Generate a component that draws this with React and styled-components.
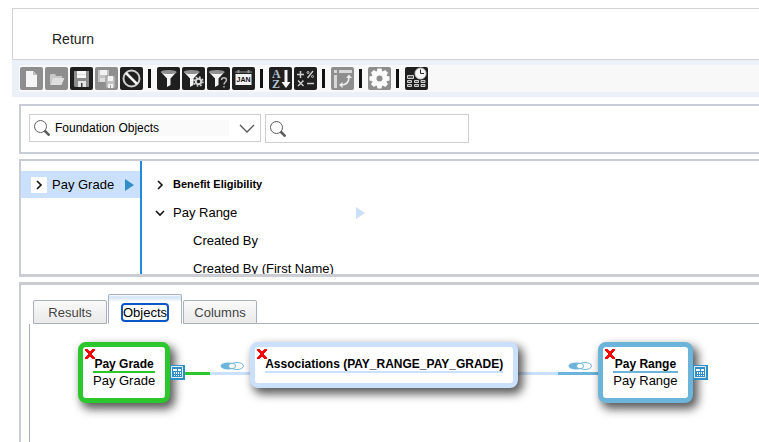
import React, { useState } from 'react';
import styled, { createGlobalStyle } from 'styled-components';

const GlobalStyle = createGlobalStyle`
  *, *::before, *::after {
    box-sizing: border-box;
  }

  body {
    margin: 0;
    background: #ffffff;
    color: #000000;
    font-family: "Liberation Sans", Arial, sans-serif;
    font-size: 13px;
  }

  button, input, select {
    font: inherit;
    color: inherit;
  }

  svg {
    display: block;
    flex: none;
  }
`;

const Page = styled.div`
  display: flex;
  flex-direction: column;
  min-height: 100vh;
  padding: 8px 0 0 12px;
  overflow: hidden;
`;

const Header = styled.header`
  display: flex;
  align-items: center;
  height: 52px;
  padding: 10px 0 0 39px;
  border: 1px solid #d2d2d2;
  border-right: none;
`;

const ReturnLink = styled.a`
  color: #222222;
  font-size: 14px;
  text-decoration: none;
`;

const ToolbarBand = styled.div`
  padding: 5px 0 5px 7px;
  background: #ecf0f8;
`;

const Toolbar = styled.div`
  display: flex;
  align-items: center;
  gap: 2px;
  height: 27px;
  padding-left: 1px;
  background: #f8f8f8;
`;

const ToolButton = styled.button`
  width: 23px;
  height: 23px;
  padding: 0;
  border: none;
  border-radius: 2px;
  background: ${(props) => (props.disabled ? '#8e8e8e' : '#1f1f1f')};
  cursor: ${(props) => (props.disabled ? 'default' : 'pointer')};
`;

const Separator = styled.span`
  width: 3px;
  height: 19px;
  margin: 0 4px 0 3px;
  background: #111111;
`;

const Main = styled.main`
  display: flex;
  flex: 1;
  flex-direction: column;
  gap: 5px;
  padding: 7px 0 0 7px;
`;

const SearchPanel = styled.section`
  display: flex;
  align-items: flex-start;
  gap: 4px;
  padding: 8px;
  height: 50px;
  border: 2px solid #c8ccd8;
  border-right: none;
`;

const Field = styled.label`
  display: flex;
  align-items: center;
  gap: 5px;
  width: ${(props) => props.$width};
  height: ${(props) => props.$height};
  padding: 0 5px 0 4px;
  border: 1px solid #cfcfcf;
`;

const ObjectSelect = styled.select`
  flex: 1;
  min-width: 0;
  height: 16px;
  margin-right: 5px;
  padding: 0;
  border: none;
  outline: none;
  background: #fafafa;
  font-size: 12px;
  appearance: none;
`;

const SearchInput = styled.input`
  flex: 1;
  min-width: 0;
  padding: 0;
  border: none;
  outline: none;
  background: transparent;
`;

const TreePanel = styled.section`
  display: grid;
  grid-template-columns: 121px 1fr;
  height: 118px;
  border: 2px solid #c8ccd8;
  border-right: none;
  border-bottom: 3px solid #cbccd4;
  overflow: hidden;
`;

const TreeColumn = styled.div`
  padding-top: 10px;
  overflow: hidden;

  &:first-child {
    border-right: 2px solid #1f8be0;
  }
`;

const TreeRow = styled.div`
  display: flex;
  align-items: center;
  gap: 5px;
  max-width: 223px;
  height: 27px;
  margin-bottom: 1px;
  padding-left: ${(props) => (props.$child ? '51px' : '10px')};
  padding-right: ${(props) => (props.$selected ? '6px' : '0')};
  background: ${(props) => (props.$selected ? '#cbe0fc' : 'transparent')};
`;

const TreeLabel = styled.span`
  flex: 1;
  white-space: nowrap;
  font-size: ${(props) => (props.$bold ? '11px' : '13px')};
  font-weight: ${(props) => (props.$bold ? 700 : 400)};
  line-height: 15px;
`;

const Expander = styled.button`
  display: flex;
  align-items: center;
  justify-content: center;
  width: 16px;
  height: 16px;
  padding: 0;
  border: none;
  background: #ffffff;
  cursor: pointer;
`;

const ResultPanel = styled.section`
  display: flex;
  flex: 1;
  flex-direction: column;
  padding: 9px 0 0 8px;
  border-top: 3px solid #cbccd0;
  border-left: 2px solid #c8ccd8;
`;

const TabList = styled.div`
  display: flex;
  align-items: flex-end;
  gap: 1px;
  padding-left: 4px;

  &::after {
    content: '';
    flex: 1;
    margin-left: -1px;
    border-bottom: 1px solid #a9b0bd;
  }
`;

const Tab = styled.button`
  width: 74px;
  height: ${(props) => (props['aria-selected'] ? '30px' : '24px')};
  padding: ${(props) => (props['aria-selected'] ? '6px 0 0' : '0')};
  border: 1px solid #a9b0bd;
  border-bottom-color: ${(props) => (props['aria-selected'] ? '#ffffff' : '#a9b0bd')};
  border-radius: 2px 2px 0 0;
  outline: none;
  background: ${(props) =>
    props['aria-selected']
      ? 'linear-gradient(#ffffff 0, #cfe3f6 2px, #ffffff 7px)'
      : 'linear-gradient(#fafafa, #e9e9e9)'};
  color: ${(props) => (props['aria-selected'] ? '#000000' : '#444444')};
  cursor: pointer;
`;

const TabText = styled.span`
  border-radius: 2px;
  outline: ${(props) => (props.$active ? '2px solid #0b57c9' : 'none')};
`;

const Canvas = styled.div`
  display: flex;
  flex: 1;
  align-items: flex-start;
  padding: 18px 0 24px 48px;
  border-left: 1px solid #a9b0bd;
`;

const Node = styled.div`
  position: relative;
  flex: none;
  padding: 10px;
  border: 5px solid ${(props) => props.$color};
  border-radius: 8px;
  background: #ffffff;
  box-shadow: 4px 5px 10px 1px rgba(0, 0, 0, 0.65);
  text-align: center;
  white-space: nowrap;
`;

const NodeTitle = styled.div`
  height: 16px;
  border-bottom: 2px solid ${(props) => props.$color};
  font-size: 12px;
  font-weight: 700;
  line-height: 14px;
`;

const NodeName = styled.div`
  line-height: 15px;
`;

const RemoveButton = styled.button`
  position: absolute;
  top: 2px;
  left: 2px;
  padding: 0;
  border: none;
  background: none;
  cursor: pointer;
`;

const TableBadge = styled.button`
  position: absolute;
  top: 18px;
  left: 100%;
  margin-left: 5px;
  padding: 0;
  border: none;
  background: none;
  z-index: 1;
`;

const Link = styled.div`
  display: flex;
  flex: none;
  flex-direction: column;
  gap: 2px;
  width: 80px;
  padding-top: 20px;
`;

const LinkToggle = styled.button`
  margin: 0 6px 0 50px;
  padding: 0;
  border: none;
  background: none;
`;

const LinkLine = styled.span`
  height: 3px;
  background: linear-gradient(
    90deg,
    ${(props) => props.$from} 50%,
    ${(props) => props.$to} 50%
  );
`;

const GREEN = '#2cc72c';
const PALE = '#cbe0fc';
const BLUE = '#6cb4d9';

const Funnel = ({ shift = 0 }) => (
  <g transform={`translate(${shift} 0)`}>
    <path d="M4 5l6 6.500v8.500l3.500-2v-6.500L19.500 5z" fill="#f4f4f4" />
    <ellipse cx="11.700" cy="5" rx="7.900" ry="2" fill="#8f8f8f" />
  </g>
);

const toolGroups = [
  [
    {
      name: 'New',
      disabled: true,
      icon: (
        <>
          <path d="M6 4h7l4 4v12H6z" fill="#f5f5f5" />
          <path d="M13 4v4h4z" fill="#bcbcbc" />
        </>
      ),
    },
    {
      name: 'Open',
      disabled: true,
      icon: (
        <>
          <path d="M5 8l1-1h4l1 2h6v3H8l-3 5z" fill="#c9c9c9" />
          <path d="M8 11h11.500l-3 7H5z" fill="#dedede" />
        </>
      ),
    },
    {
      name: 'Save',
      icon: (
        <>
          <path d="M4 4h15v16H5l-1-1z" fill="#8d8d8d" />
          <path d="M7 4h9v7H7z" fill="#f7f7f7" />
          <path d="M7 7.500h9" stroke="#dddddd" />
          <path d="M8 14h8v6H8z" fill="#e4e4e4" />
          <path d="M11 16h1.500v4H11z" fill="#444444" />
        </>
      ),
    },
    {
      name: 'Save as',
      disabled: true,
      icon: (
        <>
          <path d="M3 3h11v12H3z" fill="#c3c3c3" />
          <path d="M5 3h7v5H5z" fill="#f2f2f2" />
          <path d="M5 11h5v4H5z" fill="#dddddd" />
          <path d="M11 9h9v12h-9z" fill="#c3c3c3" stroke="#999999" />
          <path d="M13 9h5v5h-5zM13 17h5v4h-5z" fill="#f2f2f2" />
          <path d="M15.500 18v3" stroke="#a5a5a5" />
        </>
      ),
    },
    {
      name: 'Cancel',
      icon: (
        <g fill="none" stroke="#cfcfcf" strokeWidth="2">
          <circle cx="11.500" cy="11.500" r="8" />
          <path d="M6 6l11 11" stroke="#f4f4f4" strokeWidth="2.500" />
        </g>
      ),
    },
  ],
  [
    { name: 'Filter', icon: <Funnel /> },
    {
      name: 'Filter options',
      icon: (
        <>
          <Funnel shift={-2} />
          <circle cx="16.500" cy="14.500" r="4.500" fill="none" stroke="#d6d6d6" strokeWidth="1.500" strokeDasharray="1.767 1.767" />
          <circle cx="16.500" cy="14.500" r="2.700" fill="none" stroke="#d6d6d6" strokeWidth="2" />
        </>
      ),
    },
    {
      name: 'Prompt filter',
      icon: (
        <>
          <Funnel shift={-2} />
          <path d="M14.500 13c0-3 5-3 5 0 0 2-2.500 2-2.500 4.500M17 19v1.500" fill="none" stroke="#b9b9b9" strokeWidth="1.500" />
        </>
      ),
    },
    {
      name: 'Dates',
      icon: (
        <>
          <path d="M3.500 7h16v11h-16z" fill="#f3f3f3" />
          <path d="M3 4h17v2H3z" fill="#5c5c5c" />
          <path d="M6.500 3v3M16.500 3v3" stroke="#909090" strokeWidth="2" />
          <text x="11.500" y="15" textAnchor="middle" fontSize="7" fontWeight="700" fill="#111111">JAN</text>
        </>
      ),
    },
  ],
  [
    {
      name: 'Sort',
      icon: (
        <>
          <text x="3" y="11" fontFamily="Liberation Serif" fontSize="12" fontWeight="700" fill="#b4c3d6">A</text>
          <text x="3" y="21" fontFamily="Liberation Serif" fontSize="12" fontWeight="700" fill="#b4c3d6">Z</text>
          <path d="M15.500 3h3v12h3L17 21l-4.500-6h3z" fill="#f4f4f4" />
        </>
      ),
    },
    {
      name: 'Calculated columns',
      icon: (
        <g fill="none" stroke="#cccccc" strokeWidth="1.500">
          <path d="M3 7.500h7M6.500 4v7M13.500 11l5.500-7M4 13.500l5.500 5.500M9.500 13.500L4 19M13 16.500h7" />
          <circle cx="14" cy="5.500" r="1" strokeWidth="1" />
          <circle cx="18.500" cy="9.500" r="1" strokeWidth="1" />
        </g>
      ),
    },
  ],
  [
    {
      name: 'Pivot',
      disabled: true,
      icon: (
        <>
          <path d="M3 3h3v3H3zM8 3h13v3H8zM3 8h3v13H3z" fill="#d8d8d8" />
          <path d="M10 18c5 0 8-3 8-8" fill="none" stroke="#efefef" strokeWidth="1.500" />
          <path d="M15 11l3-3.500 3 3.500zM11.500 15v6L8 18z" fill="#efefef" />
        </>
      ),
    },
  ],
  [
    {
      name: 'Settings',
      disabled: true,
      icon: (
        <>
          <g fill="#fafafa">
            <circle cx="11.500" cy="11.500" r="7.500" />
            <path id="teeth" d="M9.500 1.500h4l1 4h-6zM9.500 21.500h4l1-4h-6zM1.500 9.500v4l4 1v-6zM21.500 9.500v4l-4 1v-6z" />
            <use href="#teeth" transform="rotate(45 11.500 11.500)" />
          </g>
          <circle cx="11.500" cy="11.500" r="3" fill="#8e8e8e" />
        </>
      ),
    },
  ],
  [
    {
      name: 'Schedule',
      icon: (
        <>
          <path d="M2.500 8.500h6v3h-6zM2.500 13.500h4v2h-4zM9.500 13.500h4v2h-4zM16 13.500h4v2h-4zM2.500 17.500h4v2h-4zM9.500 17.500h4v2h-4zM16 17.500h4v2h-4z" fill="#555555" stroke="#cfcfcf" />
          <circle cx="15.500" cy="6.500" r="5.500" fill="#f6f6f6" stroke="#cccccc" />
          <path d="M15.500 2.500v4H19" fill="none" stroke="#222222" />
        </>
      ),
    },
  ],
];

const SearchIcon = () => (
  <svg width="16" height="16" viewBox="0 0 16 16" fill="none" stroke="#5c5c5c">
    <circle cx="6.500" cy="6.500" r="6" />
    <path d="M10.500 10.500l5 5" strokeWidth="2.500" />
  </svg>
);

const Chevron = ({ open }) => (
  <svg width="10" height="10" viewBox="0 0 10 10" fill="none" stroke="#111111" strokeWidth="1.600">
    <path d={open ? 'M1 3l4 4 4-4' : 'M3 1l4 4-4 4'} />
  </svg>
);

const Arrow = ({ color }) => (
  <svg width="9" height="12" viewBox="0 0 9 12">
    <path d="M0 0l9 6-9 6z" fill={color} />
  </svg>
);

const RemoveIcon = () => (
  <svg width="10" height="10" viewBox="0 0 10 10" shapeRendering="crispEdges">
    <path d="M0 0h3l2 3 2-3h3v1L7 5l3 4v1H7L5 7l-2 3H0V9l3-4-3-4z" fill="#f00a0a" />
  </svg>
);

const TableIcon = () => (
  <svg width="15" height="15" viewBox="0 0 15 15">
    <path d="M0 0h15v15H0z" fill="#2f8fc6" />
    <path d="M1.500 1.500h11v11h-11z" fill="none" stroke="#e2f0f8" />
    <path d="M3 4h4v2H3zM8 4h3v2H8zM4 7h1v2H4zM6 7h1v2H6zM8 7h1v2H8zM10 7h1v2h-1zM4 10h1v1H4zM6 10h1v1H6zM8 10h1v1H8zM10 10h1v1h-1z" fill="#ffffff" />
  </svg>
);

const ToggleIcon = () => (
  <svg width="24" height="8" viewBox="0 0 24 8">
    <ellipse cx="8" cy="4" rx="7.500" ry="3.500" fill={BLUE} />
    <ellipse cx="17" cy="4" rx="6.500" ry="3.500" fill="#ffffff" stroke={BLUE} />
    <ellipse cx="12" cy="4" rx="3.500" ry="2.800" fill="#ffffff" stroke={BLUE} />
  </svg>
);

const GraphNode = ({ title, name, color, badge }) => (
  <Node $color={color}>
    <RemoveButton aria-label={`Remove ${title}`}>
      <RemoveIcon />
    </RemoveButton>
    <NodeTitle $color={color}>{title}</NodeTitle>
    {name && <NodeName>{name}</NodeName>}
    {badge && (
      <TableBadge aria-label={`${title} columns`}>
        <TableIcon />
      </TableBadge>
    )}
  </Node>
);

const Connector = ({ from, to }) => (
  <Link>
    <LinkToggle aria-label="Join type">
      <ToggleIcon />
    </LinkToggle>
    <LinkLine $from={from} $to={to} />
  </Link>
);

const tabs = ['Results', 'Objects', 'Columns'];

const App = () => {
  const [tab, setTab] = useState('Objects');

  return (
    <Page>
      <GlobalStyle />
      <Header>
        <ReturnLink href="#return">Return</ReturnLink>
      </Header>
      <ToolbarBand>
        <Toolbar role="toolbar">
          {toolGroups.map((group, index) => (
            <React.Fragment key={group[0].name}>
              {index > 0 && <Separator />}
              {group.map((tool) => (
                <ToolButton key={tool.name} aria-label={tool.name} disabled={tool.disabled}>
                  <svg width="23" height="23" viewBox="0 0 23 23">{tool.icon}</svg>
                </ToolButton>
              ))}
            </React.Fragment>
          ))}
        </Toolbar>
      </ToolbarBand>
      <Main>
        <SearchPanel>
          <Field $width="232px" $height="28px">
            <SearchIcon />
            <ObjectSelect aria-label="Object category" defaultValue="Foundation Objects">
              <option>Foundation Objects</option>
            </ObjectSelect>
            <svg width="16" height="9" viewBox="0 0 16 9" fill="none" stroke="#555555" strokeWidth="1.300">
              <path d="M1 1l7 7 7-7" />
            </svg>
          </Field>
          <Field $width="204px" $height="29px">
            <SearchIcon />
            <SearchInput type="text" aria-label="Search objects" />
          </Field>
        </SearchPanel>
        <TreePanel>
          <TreeColumn>
            <TreeRow $selected>
              <Expander aria-label="Expand Pay Grade"><Chevron /></Expander>
              <TreeLabel>Pay Grade</TreeLabel>
              <Arrow color="#2f8fc6" />
            </TreeRow>
          </TreeColumn>
          <TreeColumn>
            <TreeRow>
              <Expander aria-label="Expand Benefit Eligibility"><Chevron /></Expander>
              <TreeLabel $bold>Benefit Eligibility</TreeLabel>
            </TreeRow>
            <TreeRow>
              <Expander aria-label="Collapse Pay Range"><Chevron open /></Expander>
              <TreeLabel>Pay Range</TreeLabel>
              <Arrow color={PALE} />
            </TreeRow>
            <TreeRow $child>
              <TreeLabel>Created By</TreeLabel>
            </TreeRow>
            <TreeRow $child>
              <TreeLabel>Created By (First Name)</TreeLabel>
            </TreeRow>
          </TreeColumn>
        </TreePanel>
        <ResultPanel>
          <TabList role="tablist">
            {tabs.map((name) => (
              <Tab key={name} role="tab" aria-selected={tab === name} onClick={() => setTab(name)}>
                <TabText $active={tab === name}>{name}</TabText>
              </Tab>
            ))}
          </TabList>
          <Canvas role="tabpanel">
            {tab === 'Objects' && (
              <>
                <GraphNode title="Pay Grade" name="Pay Grade" color={GREEN} badge />
                <Connector from={GREEN} to={PALE} />
                <GraphNode title="Associations (PAY_RANGE_PAY_GRADE)" color={PALE} />
                <Connector from={PALE} to={BLUE} />
                <GraphNode title="Pay Range" name="Pay Range" color={BLUE} badge />
              </>
            )}
          </Canvas>
        </ResultPanel>
      </Main>
    </Page>
  );
};

export default App;
